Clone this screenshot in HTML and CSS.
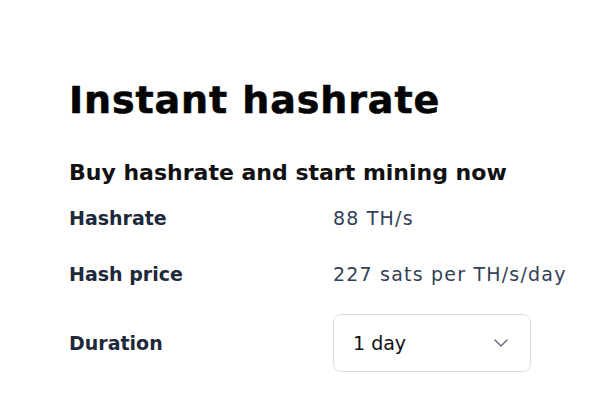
FILE: index.html
```html
<!DOCTYPE html>
<html>
<head>
<meta charset="utf-8">
<link rel="stylesheet" href="styles.css">
</head>
<body>
<main class="panel">
  <h1 class="title">Instant hashrate</h1>
  <h2 class="subtitle">Buy hashrate and start mining now</h2>
  <div class="rows">
    <div class="row">
      <span class="label">Hashrate</span>
      <span class="value">88 TH/s</span>
    </div>
    <div class="row">
      <span class="label">Hash price</span>
      <span class="value">227 sats per TH/s/day</span>
    </div>
    <div class="row row-duration">
      <span class="label">Duration</span>
      <div class="select">
        <span class="select-text">1 day</span>
        <svg class="chevron" width="16" height="16" viewBox="0 0 16 16" fill="none"><path d="M2 5 L8 11 L14 5" stroke="#6b7280" stroke-width="1.5" stroke-linecap="round" stroke-linejoin="round"/></svg>
      </div>
    </div>
  </div>
</main>
</body>
</html>
```
FILE: styles.css
```css
html, body {
  margin: 0;
  padding: 0;
  background: #ffffff;
}
body {
  font-family: "DejaVu Sans", "Noto Sans", sans-serif;
  width: 600px;
  height: 413px;
  overflow: hidden;
}
.panel {
  padding: 78px 0 0 69px;
}
.title {
  margin: 0;
  font-size: 38px;
  line-height: 44px;
  font-weight: 700;
  letter-spacing: 0.9px;
  color: #050505;
  -webkit-text-stroke: 0.6px #050505;
}
.subtitle {
  margin: 36px 0 0 0;
  font-size: 22px;
  line-height: 30px;
  font-weight: 700;
  color: #111111;
}
.rows {
  margin-top: 2px;
  display: flex;
  flex-direction: column;
}
.row {
  display: grid;
  grid-template-columns: 264px 1fr;
  align-items: center;
  height: 56px;
}
.row-duration {
  margin-top: 12px;
  height: 58px;
}
.label {
  font-size: 19px;
  font-weight: 700;
  color: #1e293b;
}
.value {
  font-size: 19px;
  font-weight: 400;
  letter-spacing: 1.2px;
  color: #334155;
}
.select {
  box-sizing: border-box;
  width: 198px;
  height: 58px;
  border: 1px solid #d9dde3;
  border-radius: 8px;
  display: flex;
  align-items: center;
  justify-content: space-between;
  padding: 0 21px 0 19px;
}
.select-text {
  font-size: 19px;
  color: #111111;
}
.chevron {
  display: block;
}
```
